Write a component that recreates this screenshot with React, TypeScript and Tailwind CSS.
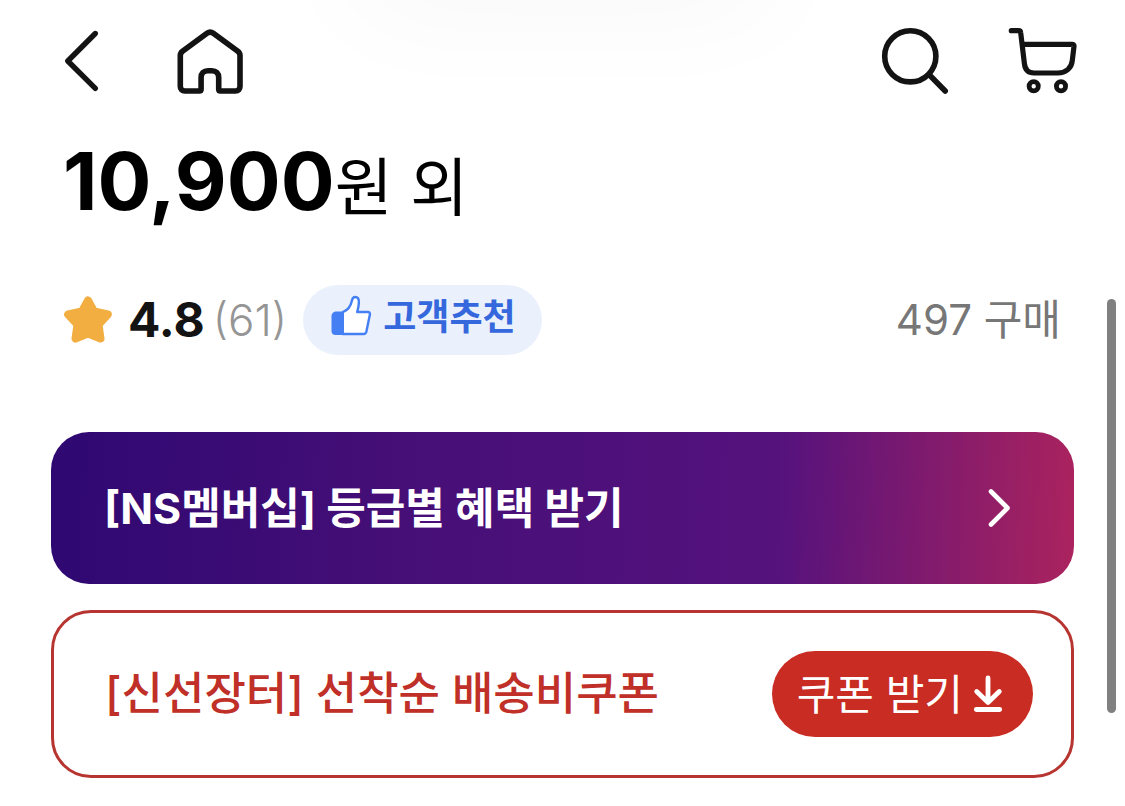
import type { ReactNode } from 'react'

function IconButton({ label, children }: { label: string; children: ReactNode }) {
  return (
    <button type="button" aria-label={label} className="block shrink-0 text-[#131313]">
      {children}
    </button>
  )
}

function BackIcon() {
  return (
    <svg width="40" height="72" viewBox="0 0 40 72" fill="none" stroke="currentColor" strokeWidth="5.4" strokeLinecap="round" strokeLinejoin="round">
      <path d="M33.3 9.5 5.8 37l27.5 27.3" />
    </svg>
  )
}

function HomeIcon() {
  return (
    <svg width="72" height="72" viewBox="0 0 72 72" fill="none" stroke="currentColor" strokeWidth="5.6" strokeLinejoin="round">
      <path d="M6.3 31.5c0-1.900.8-3.100 2.200-4.200L33 9.200c2-1.500 4.300-1.500 6.300 0l24.500 18.100c1.400 1.100 2.200 2.300 2.200 4.200V62.500c0 2.800-1.700 4.500-4.500 4.500H46.500c-1.200 0-1.800-.6-1.800-1.800V53.500c0-4.200-2.600-6.800-6.800-6.800h-4c-4.200 0-6.800 2.600-6.800 6.800v11.700c0 1.200-.6 1.800-1.800 1.800H10.800c-2.800 0-4.500-1.700-4.500-4.500z" />
    </svg>
  )
}

function SearchIcon() {
  return (
    <svg width="72" height="72" viewBox="0 0 72 72" fill="none" stroke="currentColor" strokeWidth="5.6" strokeLinecap="round">
      <circle cx="32.3" cy="32.3" r="25.6" />
      <path d="M51 50.5 67.2 67" />
    </svg>
  )
}

function CartIcon() {
  return (
    <svg width="72" height="72" viewBox="0 0 72 72" fill="none" stroke="currentColor" strokeWidth="5.2" strokeLinecap="round" strokeLinejoin="round">
      <path d="M3.3 6.7h7.2c1.3 0 2.1.6 2.200 2L16.400 39.500c.6 6 3.700 9.500 9.700 9.500h23.700c8 0 13.800-4.800 14.500-12.500l1.700-14.200c.1-1.300-.6-2-1.900-2H14.500" />
      <circle cx="25.7" cy="62.3" r="4.6" strokeWidth="4.8" />
      <circle cx="53" cy="62.3" r="4.6" strokeWidth="4.8" />
    </svg>
  )
}

function StarIcon() {
  return (
    <svg width="48" height="48" viewBox="0 0 48 48" fill="#f2ae40" stroke="#f2ae40" strokeWidth="8" strokeLinejoin="round" aria-hidden="true">
      <path d="M24 4.5 30 15.5 43.8 18.5 34.5 28.5 36.5 42.5 24 37.5 11.5 42.5 13.5 28.5 4.2 18.5 18 15.500z" />
    </svg>
  )
}

function ThumbIcon() {
  return (
    <svg width="44" height="44" viewBox="0 0 44 44" aria-hidden="true">
      <path d="M13.8 17.2c4.200-1.700 8-6.200 9-11.200.5-2.700 1.500-4 3.400-4 2.600 0 3.700 2.200 3.700 5 0 3.200-.7 6.500-1.700 10h10.700c1.600 0 2.300.9 2 2.400L37.400 36.500c-.4 1.600-1 2.500-2.700 2.500H13.800z" fill="#fff" stroke="#4480f3" strokeWidth="2.4" strokeLinejoin="round" />
      <path d="M14.5 16.5H7.500c-2.800 0-5 2-5 4.800V36c0 2.500 1.500 4 4 4h8z" fill="#4480f3" />
    </svg>
  )
}

function ChevronIcon() {
  return (
    <svg width="24" height="40" viewBox="0 0 24 40" fill="none" stroke="currentColor" strokeWidth="4.6" strokeLinecap="round" strokeLinejoin="round" aria-hidden="true">
      <path d="M4 3.5 20.5 20 4 36.500" />
    </svg>
  )
}

function DownloadIcon() {
  return (
    <svg width="30" height="40" viewBox="0 0 30 40" fill="none" stroke="currentColor" strokeWidth="4.8" strokeLinecap="round" strokeLinejoin="round" aria-hidden="true">
      <path d="M15 4v24M3.700 17.500 15 28.500l11.300-11M3.300 35.500h23.400" />
    </svg>
  )
}

export default function App() {
  return (
    <div className="relative min-h-screen overflow-hidden bg-white font-['Inter','Noto_Sans_CJK_KR',sans-serif] text-black">
      {/* Soft shade under the top edge */}
      <div className="pointer-events-none absolute -top-16 left-1/2 h-14 w-[420px] -translate-x-1/2 rounded-full shadow-[0_0_120px_rgba(0,0,0,0.06)]" />

      <header className="flex items-center justify-between pt-6 pr-[45px] pl-[62px]">
        <div className="flex gap-[72px]">
          <IconButton label="뒤로">
            <BackIcon />
          </IconButton>
          <IconButton label="홈">
            <HomeIcon />
          </IconButton>
        </div>
        <div className="flex gap-[58px]">
          <IconButton label="검색">
            <SearchIcon />
          </IconButton>
          <IconButton label="장바구니">
            <CartIcon />
          </IconButton>
        </div>
      </header>

      <main className="px-[51px] pb-7">
        {/* Price */}
        <p className="mt-[37px] flex items-baseline px-3 leading-[96px]">
          <strong className="text-[80px] font-bold">10,900</strong>
          <span className="text-[63px]">원 외</span>
        </p>

        {/* Rating and purchases */}
        <div className="mt-[50px] flex items-center justify-between px-[13px]">
          <div className="flex items-center">
            <StarIcon />
            <strong className="ml-4 text-[48px] leading-[68px] font-bold text-[#131313]">4.8</strong>
            <span className="ml-2 text-[44px] leading-[68px] font-light text-[#959595]">(61)</span>
            <span className="ml-4 flex h-[70px] items-center gap-2.5 rounded-full bg-[#eaf1fd] px-[26px] pb-1.5 text-[36px] leading-[64px] font-bold text-[#3568dc]">
              <ThumbIcon />
              고객추천
            </span>
          </div>
          <span className="text-[42px] leading-[68px] text-[#777]">497 구매</span>
        </div>

        {/* Membership banner */}
        <button
          type="button"
          className="mt-[77px] flex h-[152px] w-full items-center justify-between rounded-[38px] bg-[linear-gradient(92deg,#2f0872_0%,#460f77_35%,#55127d_71%,#ab235e_100%)] pr-[63px] pl-[53px] text-white"
        >
          <span className="text-[43px] font-bold">[NS멤버십] 등급별 혜택 받기</span>
          <ChevronIcon />
        </button>

        {/* Shipping coupon */}
        <div className="mt-[26px] flex h-[168px] items-center justify-between rounded-[40px] border-3 border-[#b73530] pr-[38px] pl-[51px]">
          <span className="text-[45px] font-medium text-[#c03028]">[신선장터] 선착순 배송비쿠폰</span>
          <button type="button" className="flex h-[86px] items-center gap-2.5 rounded-full bg-[#c92c23] pr-[30px] pl-[25px] text-[42px] text-white">
            쿠폰 받기
            <DownloadIcon />
          </button>
        </div>
      </main>

      {/* Overlay scroll thumb */}
      <div className="absolute top-[299px] right-[9px] h-[414px] w-[9px] rounded-full bg-[#808080]" />
    </div>
  )
}
